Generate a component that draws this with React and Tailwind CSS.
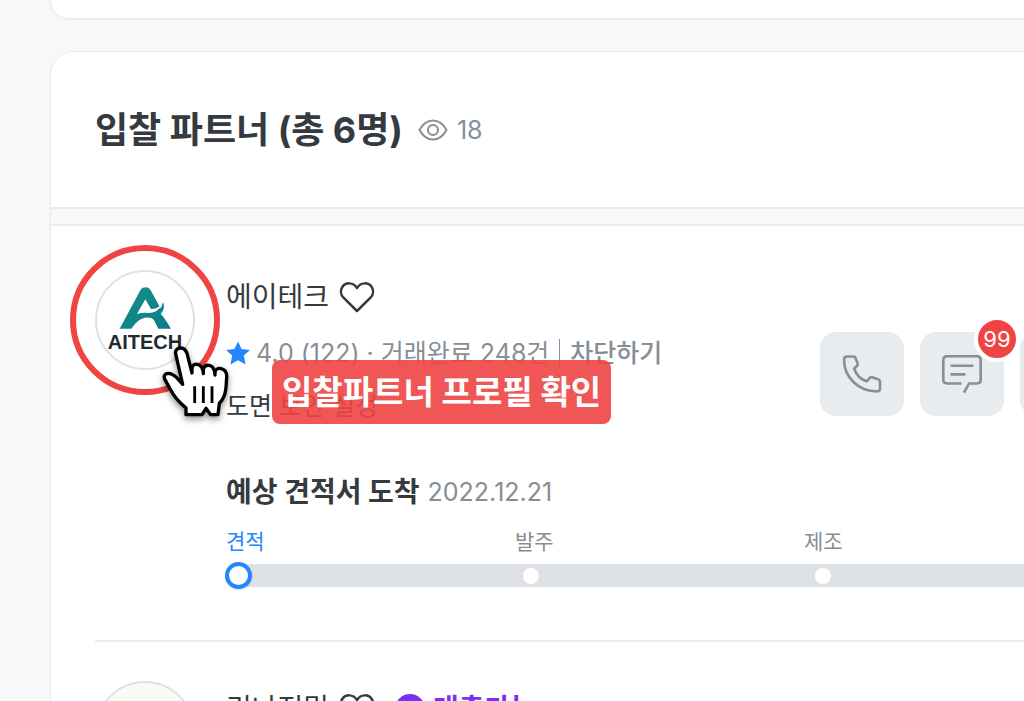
import React from "react";

function EyeIcon() {
  return (
    <svg className="h-6 w-8" viewBox="0 0 32 24" fill="none" stroke="#868e96" strokeWidth="2" aria-hidden="true">
      <path d="M2.500 12C6 5.600 10.700 2.500 16 2.500S26 5.600 29.500 12C26 18.400 21.300 21.500 16 21.500S6 18.400 2.500 12Z" strokeLinejoin="round" />
      <circle cx="16" cy="12" r="5" />
    </svg>
  );
}

function HeartIcon() {
  return (
    <svg className="h-8 w-9" viewBox="0 0 36 32" fill="none" stroke="#343a40" strokeWidth="2.500" strokeLinejoin="round" aria-hidden="true">
      <path d="M18 30 4.500 16.600C1.500 13.600 1.200 9.200 3.300 6C6.600 1.200 14 .8 18 7C22 .8 29.400 1.200 32.700 6C34.800 9.200 34.500 13.600 31.500 16.600Z" />
    </svg>
  );
}

function StarIcon() {
  return (
    <svg className="h-6 w-6" viewBox="0 0 24 24" fill="#2684ff" aria-hidden="true">
      <path d="M12 .4 15.600 8 24 8.900 17.800 14.600 19.600 23.500 12 19.200 4.400 23.500 6.200 14.600 0 8.900 8.400 8Z" />
    </svg>
  );
}

function PhoneIcon() {
  return (
    <svg className="h-10 w-10" viewBox="0 0 40 40" fill="none" stroke="#868e96" strokeWidth="2.600" strokeLinejoin="round" aria-hidden="true">
      <path d="M5 2.500H11.500C12.500 2.500 13.200 3 13.500 3.900L15.700 9.500C16 10.400 15.800 11.100 15.100 11.700L12.200 14.500C14.200 20.800 18.500 25.300 24.700 27.300L28 23.700C28.600 23.100 29.400 22.900 30.200 23.200L36.500 25.400C37.400 25.700 38 26.400 38 27.400V34.500C38 36.100 37.200 37.200 35.700 37.300C17 38.100 1.500 23 2.100 5.300C2.200 3.500 3.200 2.500 5 2.500Z" />
    </svg>
  );
}

function MessageIcon() {
  return (
    <svg className="h-10 w-10" viewBox="0 0 40 40" fill="none" stroke="#868e96" strokeWidth="2.600" aria-hidden="true">
      <path d="M19.500 29.500H5.200C2.800 29.500 1.300 28 1.300 25.600V6.200C1.300 3.800 2.800 2.300 5.200 2.300H34.800C37.200 2.300 38.700 3.800 38.700 6.200V25.600C38.700 28 37.200 29.500 34.800 29.500H27L22 38.700" />
      <path d="M8.500 11.800H31.500M8.500 20.400H23.500" />
    </svg>
  );
}

function AitechLogo() {
  return (
    <svg className="h-11 w-13" viewBox="175 150 156 128" aria-hidden="true">
      <defs>
        <linearGradient id="aitech-teal" x1="0" y1="0" x2="1" y2="1">
          <stop offset="0" stopColor="#149184" />
          <stop offset="1" stopColor="#0b7c8c" />
        </linearGradient>
      </defs>
      <path
        fill="url(#aitech-teal)"
        d="M177 276 239 161Q244 152 255 152Q265 152 270 161L298 212 L308 197Q314 218 300 232Q308 238 331 276H293L281 252Q274 240 252 243Q231 247 212 276Z"
      />
      <path d="M254 188 229 232Q246 227 262 229Q292 229 306 201Q293 216 271 217Z" fill="#fff" />
      <path d="M306 197 298 212 301 215Z" fill="#fff" />
    </svg>
  );
}

function HandCursor() {
  return (
    <svg className="absolute top-[74px] left-[65px] z-30 h-[75px] w-[72px] overflow-visible drop-shadow-[0_3px_3px_rgba(0,0,0,0.45)]" viewBox="300 325 216 225" aria-hidden="true">
      <path
        fill="#fff"
        stroke="#000"
        strokeWidth="10"
        strokeLinejoin="round"
        d="M368 446 348 359C344 345 350 338 360 337C371 336 377 342 381 353L396 412V398C397 386 405 385 412 386C423 388 429 396 430 414V402C432 390 440 388 448 389C459 391 464 399 465 418V410C467 399 475 397 483 399C496 402 501 410 500 425L498 455C496 478 491 491 478 503L474 537H452L438 518L426 537H378V517C361 503 343 486 331 461L315 432C309 421 315 414 324 413C334 413 342 418 350 426Z"
      />
      <path d="M404 452V502M430 452V502M456 452V502" stroke="#000" strokeWidth="8.500" fill="none" />
    </svg>
  );
}

function FavoriteButton({ label }) {
  return (
    <button type="button" aria-label={label} className="flex">
      <HeartIcon />
    </button>
  );
}

function ActionButton({ label, badge, children }) {
  return (
    <button type="button" aria-label={label} className="relative flex size-[84px] items-center justify-center rounded-2xl bg-[#e9ecef]">
      {children}
      {badge && (
        <span className="absolute -top-4 -right-4 flex size-[46px] items-center justify-center rounded-full border-4 border-white bg-[#f04444] text-[22px] leading-none text-white">
          {badge}
        </span>
      )}
    </button>
  );
}

const stages = ["견적", "발주", "제조"];

function Progress() {
  return (
    <div>
      <div className="mr-[11px] grid grid-cols-3 text-[21px] leading-7 text-[#868e96]">
        {stages.map((stage, i) => (
          <span key={stage} className={i === 0 ? "text-[#2684ff]" : ""}>
            {stage}
          </span>
        ))}
      </div>
      <div className="mt-2 grid h-[23px] grid-cols-3 content-center items-center rounded-full bg-[#dee2e6]">
        {stages.map((stage, i) => (
          <span key={stage} className="flex w-6 justify-center">
            {i === 0 ? (
              <span className="size-[27px] shrink-0 rounded-full border-4 border-[#2684ff] bg-white shadow-sm" />
            ) : (
              <span className="size-4 rounded-full bg-white" />
            )}
          </span>
        ))}
      </div>
    </div>
  );
}

export default function App() {
  return (
    <main className="h-screen overflow-hidden bg-[#f7f8fa] pl-[50px] font-['Inter','Noto_Sans_CJK_KR',sans-serif] text-[#343a40]">
      <div className="-mr-[125px]">
        <div className="h-[19px] rounded-b-3xl border border-t-0 border-[#e9ecef] bg-white shadow-xs" />

        <section className="mt-8 rounded-t-3xl border border-[#e9ecef] bg-white shadow-xs">
          <header className="flex h-[155px] items-center gap-[14px] px-11">
            <h1 className="text-[36px] leading-[48px] font-bold">입찰 파트너 (총 6명)</h1>
            <span className="flex items-center gap-2 text-[25px] leading-8 text-[#868e96]">
              <EyeIcon />
              18
            </span>
          </header>
          <div className="h-[19px] border-y-2 border-[#e9ecef] bg-[#f7f8fa]" />

          <article className="mx-11 flex gap-[31px] border-b-2 border-[#e9ecef] pt-11 pb-[53px]">
            <div className="relative size-[100px] shrink-0">
              <div className="flex size-full flex-col items-center rounded-full border-2 border-[#dee2e6] bg-white pt-[14px]">
                <AitechLogo />
                <span className="font-['Liberation_Sans',sans-serif] text-[20px] leading-6 font-bold text-[#212b2e]">AITECH</span>
              </div>
              <div className="absolute -inset-[25px] z-10 rounded-full border-6 border-[#f04444]" />
              <HandCursor />
            </div>

            <div className="min-w-0 flex-1 pt-[9px]">
              <div className="relative flex justify-between">
                <div>
                  <div className="flex items-center gap-[10px]">
                    <h2 className="text-[28px] leading-9">에이테크</h2>
                    <FavoriteButton label="에이테크 찜하기" />
                  </div>
                  <div className="mt-[22px] flex items-center text-[25px] leading-8 text-[#868e96]">
                    <StarIcon />
                    <span className="ml-[6px]">4.0 (122) · 거래완료 248건</span>
                    <span className="mx-[10px] h-7 w-px bg-[#868e96]" />
                    <button type="button" className="font-medium">차단하기</button>
                  </div>
                  <p className="mt-[21px] text-[25px] leading-8">도면 보안 설정</p>
                </div>
                <div className="mt-[53px] flex gap-4">
                  <ActionButton label="전화">
                    <PhoneIcon />
                  </ActionButton>
                  <ActionButton label="메시지" badge="99">
                    <MessageIcon />
                  </ActionButton>
                  <ActionButton label="더보기" />
                </div>
                <div role="tooltip" className="absolute top-[81px] left-[46px] z-20 flex h-16 items-center rounded-lg bg-[#ef4444]/90 px-[10px] text-[33px] leading-none font-bold whitespace-nowrap text-white">
                  입찰파트너 프로필 확인
                </div>
              </div>

              <p className="mt-[50px] mb-4 flex items-center gap-2 text-[28px] leading-10 font-bold">
                예상 견적서 도착
                <time className="text-[25px] font-normal text-[#868e96]">2022.12.21</time>
              </p>
              <Progress />
            </div>
          </article>

          <article className="mx-11 flex gap-[31px] pt-[39px] pb-11">
            <div className="size-[100px] shrink-0 rounded-full border-2 border-[#dee2e6] bg-[#fafbf7]" />
            <div className="flex items-center gap-[10px] self-start pt-[10px]">
              <h2 className="text-[28px] leading-9">리나정밀</h2>
              <FavoriteButton label="리나정밀 찜하기" />
              <span className="ml-[10px] flex items-center gap-2 text-[28px] leading-9 font-bold text-[#7b2ff7]">
                <span className="size-[30px] rounded-full bg-[#7b2ff7]" />
                대출가능
              </span>
            </div>
          </article>
        </section>
      </div>
    </main>
  );
}
